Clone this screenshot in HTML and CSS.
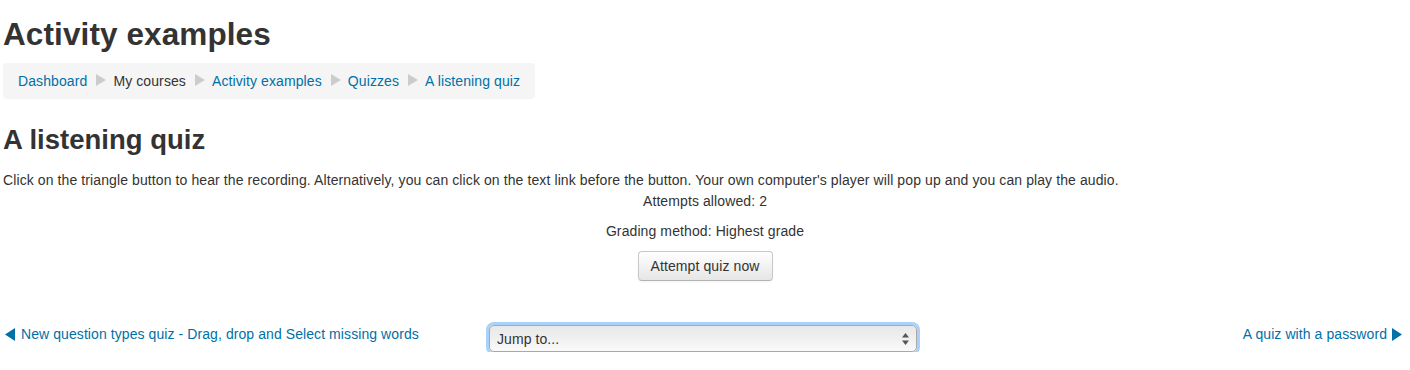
FILE: index.html
```html
<!DOCTYPE html>
<html lang="en">
<head>
<meta charset="utf-8">
<title>A listening quiz</title>
<link rel="stylesheet" href="styles.css">
</head>
<body>
<div class="page">
  <header class="page-header">
    <h1 class="page-title">Activity examples</h1>
    <nav class="breadcrumb">
      <a href="#" class="crumb-link">Dashboard</a>
      <svg class="sep" width="10" height="12" viewBox="0 0 10 12"><path d="M0 0 L10 6 L0 12 Z"/></svg>
      <span class="crumb-text">My courses</span>
      <svg class="sep" width="10" height="12" viewBox="0 0 10 12"><path d="M0 0 L10 6 L0 12 Z"/></svg>
      <a href="#" class="crumb-link">Activity examples</a>
      <svg class="sep" width="10" height="12" viewBox="0 0 10 12"><path d="M0 0 L10 6 L0 12 Z"/></svg>
      <a href="#" class="crumb-link">Quizzes</a>
      <svg class="sep" width="10" height="12" viewBox="0 0 10 12"><path d="M0 0 L10 6 L0 12 Z"/></svg>
      <a href="#" class="crumb-link">A listening quiz</a>
    </nav>
  </header>

  <main class="content">
    <h2 class="quiz-title">A listening quiz</h2>
    <p class="intro">Click on the triangle button to hear the recording. Alternatively, you can click on the text link before the button. Your own computer's player will pop up and you can play the audio.</p>
    <div class="quiz-info">
      <p class="info-line first">Attempts allowed: 2</p>
      <p class="info-line">Grading method: Highest grade</p>
      <button class="btn" type="button">Attempt quiz now</button>
    </div>

    <div class="activity-nav">
      <a href="#" class="nav-link prev">
        <svg class="nav-arrow" width="10" height="13" viewBox="0 0 10 13"><path d="M10 0 L0 6.5 L10 13 Z"/></svg>
        <span>New question types quiz - Drag, drop and Select missing words</span>
      </a>
      <div class="jump">
        <span class="jump-text">Jump to...</span>
        <svg class="jump-arrows" width="7" height="12" viewBox="0 0 7 12"><path d="M3.5 0 L7 4.5 L0 4.5 Z M3.5 12 L7 7.5 L0 7.5 Z"/></svg>
      </div>
      <a href="#" class="nav-link next">
        <span>A quiz with a password</span>
        <svg class="nav-arrow" width="10" height="13" viewBox="0 0 10 13"><path d="M0 0 L10 6.5 L0 13 Z"/></svg>
      </a>
    </div>
  </main>
</div>
</body>
</html>
```

FILE: styles.css
```css
html, body {
  margin: 0;
  padding: 0;
  background: #ffffff;
}

body {
  font-family: "Liberation Sans", Arial, Helvetica, sans-serif;
  font-size: 14px;
  line-height: 20px;
  color: #333333;
}

a {
  color: #0070a8;
  text-decoration: none;
}

.page {
  padding: 0 3px;
}

.page-title {
  margin: 14px 0 9px 0;
  font-size: 31.5px;
  line-height: 40px;
  font-weight: bold;
  color: #333333;
  letter-spacing: 0.1px;
}

.breadcrumb {
  display: inline-flex;
  align-items: center;
  padding: 8px 15px;
  background: #f5f5f5;
  border-radius: 4px;
  line-height: 20px;
  letter-spacing: 0.1px;
}

.sep {
  fill: #cccccc;
  margin: 0 7px 0 9px;
  position: relative;
  top: -1px;
}

.crumb-text {
  color: #333333;
}

.quiz-title {
  margin: 21px 0 10px 0;
  font-size: 27.5px;
  line-height: 40px;
  font-weight: bold;
  color: #333333;
}

.intro {
  margin: 0 0 1px 0;
  letter-spacing: 0.1px;
}

.quiz-info {
  display: flex;
  flex-direction: column;
  align-items: center;
  letter-spacing: 0.1px;
}

.info-line {
  margin: 0 0 10px 0;
}

.btn {
  font-family: "Liberation Sans", Arial, Helvetica, sans-serif;
  font-size: 14px;
  line-height: 20px;
  letter-spacing: 0.1px;
  color: #333333;
  padding: 4px 12px;
  border: 1px solid #c8c8c8;
  border-bottom-color: #b3b3b3;
  border-radius: 4px;
  background: linear-gradient(to bottom, #ffffff, #e6e6e6);
  box-shadow: inset 0 1px 0 rgba(255,255,255,0.2), 0 1px 2px rgba(0,0,0,0.05);
  height: 30px;
  width: 135px;
}

.activity-nav {
  display: grid;
  grid-template-columns: 1fr auto 1fr;
  align-items: start;
  margin-top: 41px;
  letter-spacing: 0.08px;
}

.nav-link {
  display: flex;
  align-items: center;
  margin-top: 2px;
}

.nav-arrow {
  fill: #0070a8;
}

.prev {
  justify-self: start;
  padding-left: 2px;
}

.prev .nav-arrow {
  margin-right: 6px;
}

.next {
  justify-self: end;
  padding-right: 5px;
}

.next .nav-arrow {
  margin-left: 5px;
}

.jump {
  width: 428px;
  height: 27px;
  box-sizing: border-box;
  display: flex;
  align-items: center;
  justify-content: space-between;
  padding: 0 7px 0 7px;
  border: 1px solid #a9a9a9;
  border-radius: 5px;
  background: linear-gradient(to bottom, #e8e8e8 0%, #efefef 45%, #fafafa 100%);
  box-shadow: 0 0 0 3px #a9d1fa;
  margin-top: 3px;
  margin-left: -4px;
}

.jump-text {
  color: #333333;
  padding-top: 1px;
}

.jump-arrows {
  fill: #555555;
}
```
